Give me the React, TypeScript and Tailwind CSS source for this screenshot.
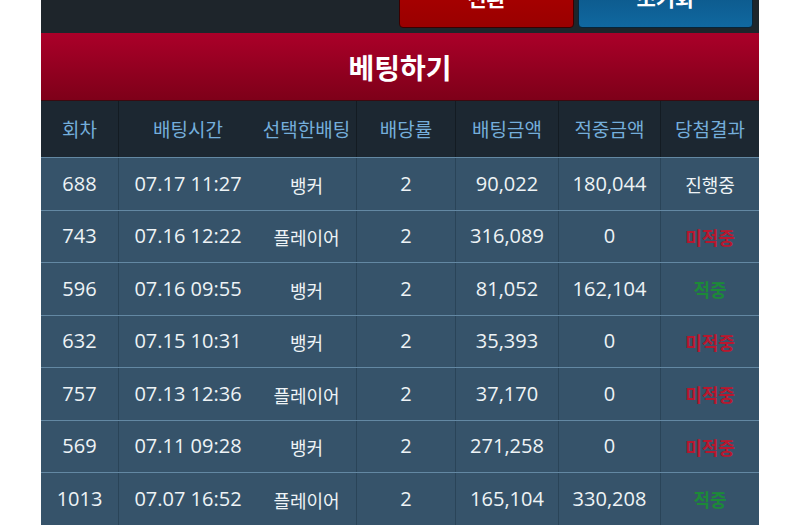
import React from "react";

type Row = { no: string; time: string; pick: string; odds: string; bet: string; win: string; result: "진행중" | "미적중" | "적중" };

const rows: Row[] = [
  { no: "688", time: "07.17 11:27", pick: "뱅커", odds: "2", bet: "90,022", win: "180,044", result: "진행중" },
  { no: "743", time: "07.16 12:22", pick: "플레이어", odds: "2", bet: "316,089", win: "0", result: "미적중" },
  { no: "596", time: "07.16 09:55", pick: "뱅커", odds: "2", bet: "81,052", win: "162,104", result: "적중" },
  { no: "632", time: "07.15 10:31", pick: "뱅커", odds: "2", bet: "35,393", win: "0", result: "미적중" },
  { no: "757", time: "07.13 12:36", pick: "플레이어", odds: "2", bet: "37,170", win: "0", result: "미적중" },
  { no: "569", time: "07.11 09:28", pick: "뱅커", odds: "2", bet: "271,258", win: "0", result: "미적중" },
  { no: "1013", time: "07.07 16:52", pick: "플레이어", odds: "2", bet: "165,104", win: "330,208", result: "적중" },
];

const ko = { fontFamily: '"Noto Sans CJK KR", "Noto Sans", sans-serif' };
const num = { fontFamily: '"Open Sans", "Noto Sans CJK KR", sans-serif' };

export default function App() {
  return (
    <div className="w-[800px] h-[526px] bg-white overflow-hidden">
      <div className="ml-[41px] w-[718px]">
        {/* top bar */}
        <div className="h-[33px] bg-[#1e252b] flex justify-end gap-[4px] pr-[6px] overflow-hidden">
          <div
            className="-mt-[32px] h-[60px] w-[175px] rounded-b-[4px] border border-[#3a0000] bg-gradient-to-b from-[#b00000] to-[#9a0000] flex items-center justify-center text-white text-[21px] font-bold"
            style={ko}
          >
            전환
          </div>
          <div
            className="-mt-[32px] h-[60px] w-[175px] rounded-b-[4px] border border-[#06253a] bg-gradient-to-b from-[#0b4f7e] to-[#1068a0] flex items-center justify-center text-white text-[21px] font-bold"
            style={ko}
          >
            초기화
          </div>
        </div>
        {/* title band */}
        <div
          className="h-[68px] bg-gradient-to-b from-[#ab0029] to-[#7e0019] border-b border-[#3a0a10] flex items-center justify-center text-white text-[28px] font-bold"
          style={ko}
        >
          베팅하기
        </div>
        {/* header row */}
        <div className="h-[56px] bg-[#1c2731] flex text-[#74aedb] text-[19px]" style={ko}>
          <div className="w-[78px] flex items-center justify-center border-r border-[#131b22]">회차</div>
          <div className="w-[138px] flex items-center justify-center">배팅시간</div>
          <div className="w-[100px] flex items-center justify-center border-r border-[#131b22]">선택한배팅</div>
          <div className="w-[99px] flex items-center justify-center border-r border-[#131b22]">배당률</div>
          <div className="w-[103px] flex items-center justify-center border-r border-[#131b22]">배팅금액</div>
          <div className="w-[102px] flex items-center justify-center border-r border-[#131b22]">적중금액</div>
          <div className="flex-1 flex items-center justify-center">당첨결과</div>
        </div>
        {/* rows */}
        {rows.map((r) => (
          <div key={r.no + r.time} className="h-[52.5px] bg-[#36536a] border-t border-[#6388a3] flex text-[#eef3f6] text-[20px]">
            <div className="w-[78px] flex items-center justify-center border-r border-[#2a4458]" style={num}>{r.no}</div>
            <div className="w-[138px] flex items-center justify-center" style={num}>{r.time}</div>
            <div className="w-[100px] flex items-center justify-center border-r border-[#2a4458] text-[18px] pt-[3px]" style={ko}>{r.pick}</div>
            <div className="w-[99px] flex items-center justify-center border-r border-[#2a4458]" style={num}>{r.odds}</div>
            <div className="w-[103px] flex items-center justify-center border-r border-[#2a4458]" style={num}>{r.bet}</div>
            <div className="w-[102px] flex items-center justify-center border-r border-[#2a4458]" style={num}>{r.win}</div>
            <div
              className={
                "flex-1 flex items-center justify-center pt-[2px] " +
                (r.result === "진행중"
                  ? "text-[18px] text-[#eef3f6]"
                  : r.result === "미적중"
                  ? "text-[18px] font-bold text-[#b8172e]"
                  : "text-[18px] font-bold text-[#1c8a38]")
              }
              style={ko}
            >
              {r.result}
            </div>
          </div>
        ))}
      </div>
    </div>
  );
}
